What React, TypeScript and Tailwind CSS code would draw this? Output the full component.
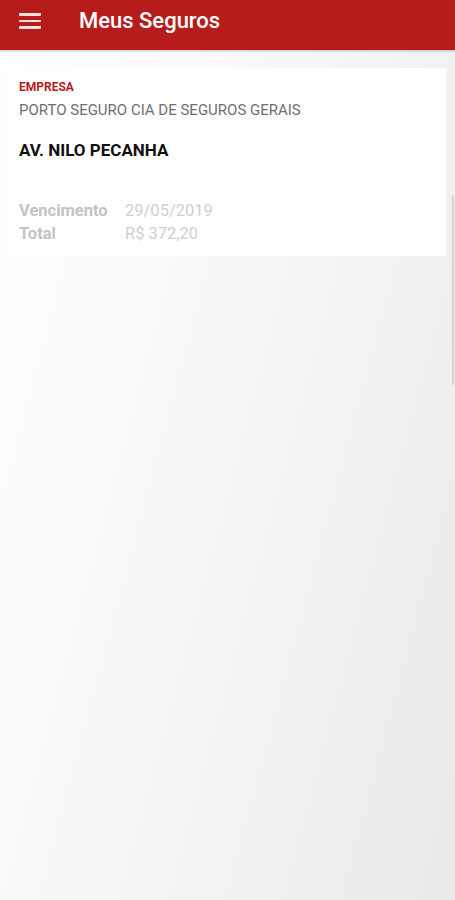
export default function App() {
  return (
    <div className="relative h-[900px] w-[455px] overflow-hidden bg-[linear-gradient(105deg,#ffffff_0%,#fdfbfc_30%,#f2f3f3_60%,#e9eaec_100%)] font-['Roboto',sans-serif]">
      <header className="h-[50px] w-full bg-[#b71c1c] flex items-center pb-[8px] shadow-[0_1px_2px_rgba(0,0,0,0.25)]">
        <div className="w-[22px] ml-[19px] flex flex-col gap-[4px]">
          <span className="block h-[2.5px] w-full rounded-[1px] bg-[#f6e2e2]" />
          <span className="block h-[2.5px] w-full rounded-[1px] bg-[#f6e2e2]" />
          <span className="block h-[2.5px] w-full rounded-[1px] bg-[#f6e2e2]" />
        </div>
        <h1 className="ml-[38px] text-white text-[22px] font-medium leading-[26px]">Meus Seguros</h1>
      </header>

      <section className="mt-[18px] mx-[8px] w-[438px] h-[188px] bg-white px-[11px] pt-[12px]">
        <p className="text-[#b71c1c] text-[12px] font-bold leading-[14px]">EMPRESA</p>
        <p className="mt-[7px] text-[#6f6f6f] text-[15px] leading-[18px]">PORTO SEGURO CIA DE SEGUROS GERAIS</p>
        <p className="mt-[21px] text-[#111] text-[17px] font-bold leading-[20px]">AV. NILO PECANHA</p>

        <div className="mt-[41px] grid grid-cols-[106px_1fr] gap-y-[3px] text-[16.5px] leading-[20px]">
          <span className="text-[#c4c4c4] font-bold">Vencimento</span>
          <span className="text-[#d0d0d0]">29/05/2019</span>
          <span className="text-[#c4c4c4] font-bold">Total</span>
          <span className="text-[#d0d0d0]">R$ 372,20</span>
        </div>
      </section>

      <div className="absolute right-[1px] top-[195px] h-[190px] w-[2px] rounded-full bg-[#d4d4d4]" />
    </div>
  );
}
